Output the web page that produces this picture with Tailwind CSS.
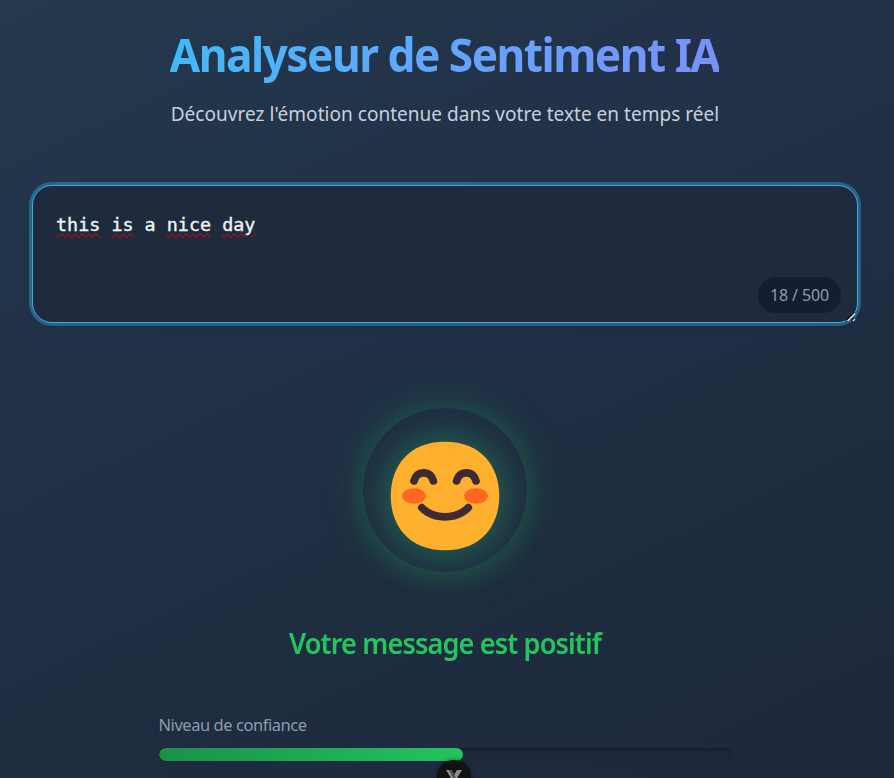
<!DOCTYPE html>
<html lang="fr">
<head>
<meta charset="utf-8">
<title>Analyseur de Sentiment IA</title>
<script src="https://cdn.jsdelivr.net/npm/@tailwindcss/browser@4"></script>
</head>
<body class="h-[778px] overflow-hidden bg-[linear-gradient(155deg,#25384c_0%,#203047_45%,#1f2d40_65%,#1d273a_100%)] font-['Noto_Sans',sans-serif]">
<main class="relative flex h-[778px] w-[890px] flex-col items-center overflow-hidden px-8 pt-[25px]">
  <h1 class="h-[58px] origin-center scale-x-[0.963] whitespace-nowrap bg-linear-to-r from-[#40b8fb] to-[#7891fa] bg-clip-text text-[46px] leading-[58px] font-bold tracking-[-1.6px] text-transparent">Analyseur de Sentiment IA</h1>
  <p class="mt-[17px] h-7 whitespace-nowrap text-[19px] leading-7 tracking-[0.03px] text-[#c6d0dd]">Découvrez l'émotion contenue dans votre texte en temps réel</p>

  <section class="relative mt-[57px] h-[138px] w-[826px] shrink-0 rounded-[20px] border border-[#38aeea] bg-[#1f2b3c] px-[23px] pt-[25px] shadow-[0_0_0_3px_rgba(56,174,234,0.4),0_4px_8px_rgba(0,0,0,0.1)]">
    <div class="font-['DejaVu_Sans_Mono',monospace] text-[18.4px] leading-7 text-[#eef3f8] [-webkit-text-stroke:0.35px_#eef3f8]"><span class="underline decoration-[#f00000] decoration-wavy decoration-1 underline-offset-2">this</span> <span class="underline decoration-[#f00000] decoration-wavy decoration-1 underline-offset-2">is</span> a <span class="underline decoration-[#f00000] decoration-wavy decoration-1 underline-offset-2">nice</span> <span class="underline decoration-[#f00000] decoration-wavy decoration-1 underline-offset-2">day</span></div>
    <div class="absolute right-[16px] bottom-[9px] flex h-9 w-[83px] items-center justify-center rounded-full bg-[#151e31] text-[16px] tracking-[-0.1px] text-[#8d9bb0]">18 / 500</div>
    <svg class="absolute right-0 bottom-0" width="12" height="12" viewBox="0 0 12 12"><path d="M1.500 10.500 9.500 2.500M7 10.500l2-2" stroke="#0a0f18" stroke-width="1.8"/><path d="M2.500 11 10 3.500M8 11l2-2" stroke="#dce4ea" stroke-width="1.4"/></svg>
  </section>

  <div class="mt-[84.500px] flex size-[164px] shrink-0 items-center justify-center rounded-full bg-[#1f2c42] shadow-[0_0_40px_rgba(34,197,94,0.3)]">
    <svg class="mt-[12px] drop-shadow-[0_0_20px_rgba(34,197,94,0.5)]" width="124" height="124" viewBox="0 0 32 32" fill="none">
      <path d="M16 30C25.33 30 30 23.73 30 16S25.33 2 16 2 2 8.27 2 16s4.67 14 14 14Z" fill="#ffb02e"/>
      <ellipse cx="8" cy="16" rx="3.05" ry="2.02" fill="#ff6723"/><ellipse cx="24" cy="16" rx="3.05" ry="2.02" fill="#ff6723"/>
      <path d="M8 12.1C8.3 10.8 9.2 10 10.5 10S12.7 10.8 13 12.1M19 12.1C19.3 10.8 20.2 10 21.5 10S23.7 10.8 24 12.1M10 19C10 19 12 21.4 16 21.4S22 19 22 19" stroke="#402a32" stroke-width="2" stroke-linecap="round" stroke-linejoin="round"/>
    </svg>
  </div>

  <h2 class="mt-[51.500px] h-10 origin-center scale-x-[0.969] whitespace-nowrap text-[28px] leading-10 font-semibold tracking-[-0.9px] text-[#22c55e]">Votre message est positif</h2>

  <section class="mt-[50px] w-[573px]">
    <p class="h-6 text-[16.5px] leading-6 tracking-[-0.45px] text-[#8d9bb0]">Niveau de confiance</p>
    <div class="mt-[11px] h-[13px] overflow-hidden rounded-full bg-[#1f2b3d]/40 shadow-[inset_0_2px_4px_rgba(0,0,0,0.3)]">
      <div class="h-full rounded-full bg-linear-to-r from-[#1a9147] to-[#22c55e]" style="width:53.1%"></div>
    </div>
  </section>
  <div class="absolute top-[760px] left-[437px] flex size-[34px] items-center justify-center rounded-full bg-[#111214] shadow-[0_0_4px_rgba(0,0,0,0.5)]">
    <svg class="mt-[2px]" width="18" height="16" viewBox="0 0 18 16"><path d="M1 0h5l3 5 3-5h5l-5.500 9v7h-5V9Z" fill="#8f8f8f"/><path d="M4 0h3l4 8-2 2Z" fill="#505050"/></svg>
  </div>
</main>
</body>
</html>
